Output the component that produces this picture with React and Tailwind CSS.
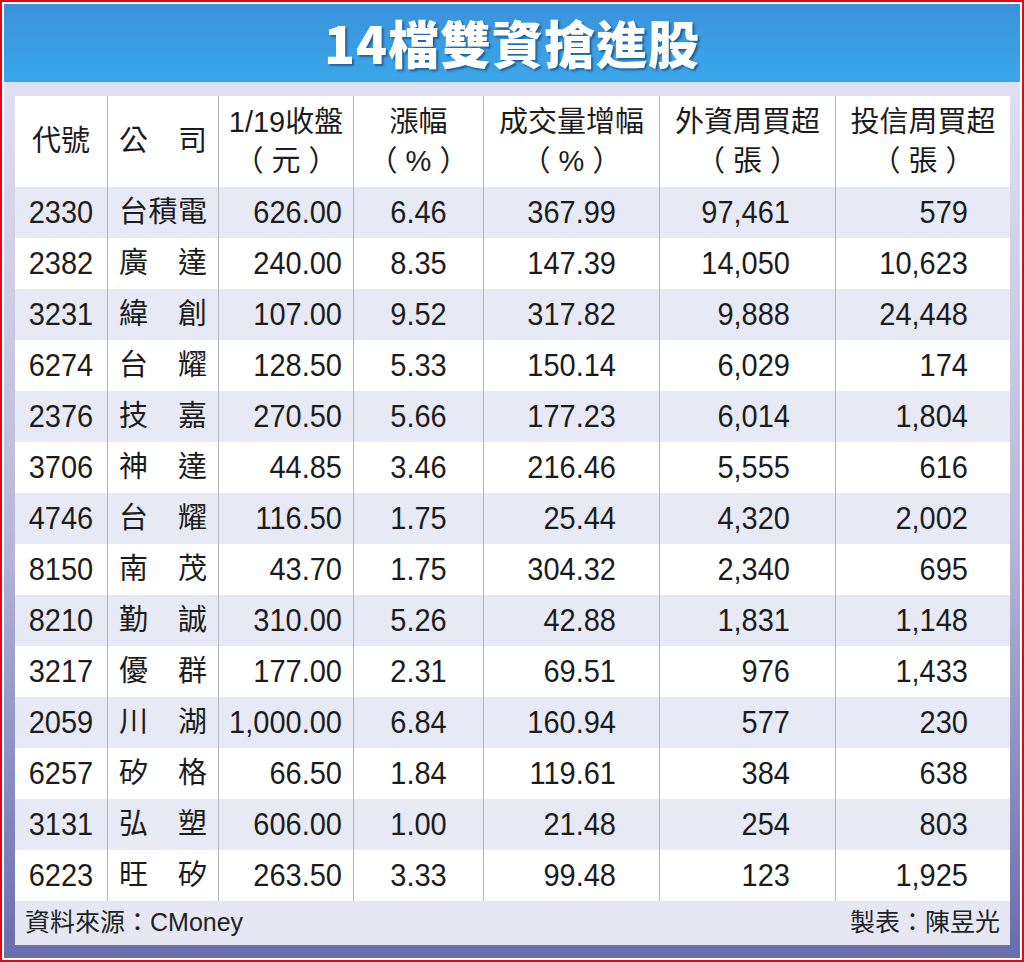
const rows = [
  ['2330', '台積電', '626.00', '6.46', '367.99', '97,461', '579'],
  ['2382', '廣達', '240.00', '8.35', '147.39', '14,050', '10,623'],
  ['3231', '緯創', '107.00', '9.52', '317.82', '9,888', '24,448'],
  ['6274', '台耀', '128.50', '5.33', '150.14', '6,029', '174'],
  ['2376', '技嘉', '270.50', '5.66', '177.23', '6,014', '1,804'],
  ['3706', '神達', '44.85', '3.46', '216.46', '5,555', '616'],
  ['4746', '台耀', '116.50', '1.75', '25.44', '4,320', '2,002'],
  ['8150', '南茂', '43.70', '1.75', '304.32', '2,340', '695'],
  ['8210', '勤誠', '310.00', '5.26', '42.88', '1,831', '1,148'],
  ['3217', '優群', '177.00', '2.31', '69.51', '976', '1,433'],
  ['2059', '川湖', '1,000.00', '6.84', '160.94', '577', '230'],
  ['6257', '矽格', '66.50', '1.84', '119.61', '384', '638'],
  ['3131', '弘塑', '606.00', '1.00', '21.48', '254', '803'],
  ['6223', '旺矽', '263.50', '3.33', '99.48', '123', '1,925'],
]

const cols = 'grid grid-cols-[92px_111px_135px_130px_176px_176px_175px]'
const line = 'border-l border-[#b3b4bc]'

function Num({ children }) {
  return <span className="inline-block scale-y-110">{children}</span>
}

function Spread({ text }) {
  return (
    <div className="flex justify-between px-[11px] w-full">
      {text.split('').map((ch, i) => <span key={i}>{ch}</span>)}
    </div>
  )
}

function HeadCell({ top, bottom, first }) {
  return (
    <div className={`flex flex-col items-center justify-center leading-[39px] ${first ? '' : line}`}>
      <span>{top}</span>
      {bottom && <span className="whitespace-pre">{bottom}</span>}
    </div>
  )
}

export default function App() {
  return (
    <div className="w-[1024px] h-[962px] border-2 border-[#e30613] bg-white p-[2px] font-['Liberation_Sans','Noto_Sans_CJK_TC',sans-serif] text-[#1c1c1c]">
      <div className="flex flex-col h-full">
        <div className="h-[78px] shrink-0 flex items-center justify-center pb-[2px] bg-gradient-to-b from-[#3b93da] to-[#3aa7ea]">
          <h1 className="text-white text-[51px] font-black tracking-[1px] font-['Noto_Sans_CJK_TC',sans-serif] [text-shadow:2px_2px_2px_rgba(10,50,100,0.55)]">
            14檔雙資搶進股
          </h1>
        </div>

        <div className="flex-1 pt-[14px] pb-[12px] pl-[11px] pr-[10px] bg-gradient-to-b from-[#dfe0f1] via-[#b9badb] to-[#6a6dae]">
          <div className="text-[29px]">
            <div className={`${cols} h-[91px] bg-white`}>
              <HeadCell top="代號" first />
              <div className={`flex items-center ${line}`}><Spread text="公司" /></div>
              <HeadCell top="1/19收盤" bottom="（ 元 ）" />
              <HeadCell top="漲幅" bottom="（ % ）" />
              <HeadCell top="成交量增幅" bottom="（ % ）" />
              <HeadCell top="外資周買超" bottom="（ 張 ）" />
              <HeadCell top="投信周買超" bottom="（ 張 ）" />
            </div>

            {rows.map((r, i) => (
              <div key={r[0] + i} className={`${cols} h-[51px] ${i % 2 === 0 ? 'bg-[#e7eaf5]' : 'bg-white'}`}>
                <div className="flex items-center justify-center"><Num>{r[0]}</Num></div>
                <div className={`flex items-center ${line}`}><Spread text={r[1]} /></div>
                <div className={`flex items-center justify-end pr-[11px] ${line}`}><Num>{r[2]}</Num></div>
                <div className={`flex items-center justify-center ${line}`}><Num>{r[3]}</Num></div>
                <div className={`flex items-center justify-end pr-[43px] ${line}`}><Num>{r[4]}</Num></div>
                <div className={`flex items-center justify-end pr-[45px] ${line}`}><Num>{r[5]}</Num></div>
                <div className={`flex items-center justify-end pr-[42px] ${line}`}><Num>{r[6]}</Num></div>
              </div>
            ))}

            <div className="h-[44px] flex items-center justify-between pl-[10px] pr-[10px] bg-[#e6e7f3] text-[25px] text-[#222]">
              <span>資料來源：CMoney</span>
              <span>製表：陳昱光</span>
            </div>
          </div>
        </div>
      </div>
    </div>
  )
}
